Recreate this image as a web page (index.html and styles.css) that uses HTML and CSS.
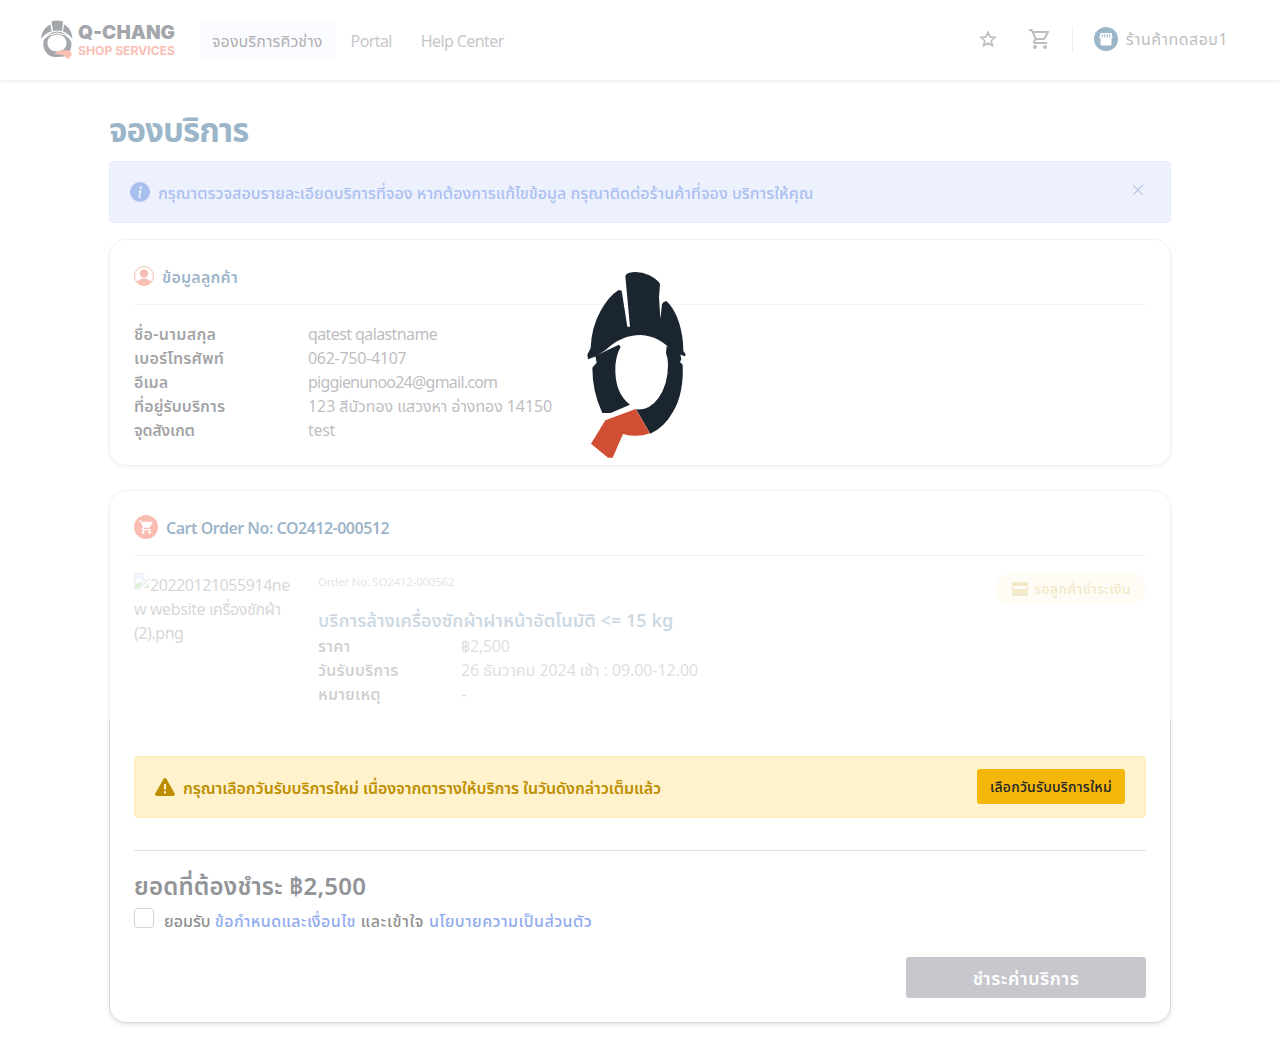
FILE: index.html
```html
<!DOCTYPE html>
<html lang="th">
<head>
<meta charset="utf-8">
<title>Q-CHANG Shop Services</title>
<link rel="stylesheet" href="styles.css">
</head>
<body>
<header class="topbar">
  <svg class="brand" width="138" height="42" viewBox="0 0 138 42">
    <g fill="#1b2530">
      <path fill-rule="evenodd" d="M3.500 21a14.500 14.800 0 0 1 27 0l1 2a15 15 0 0 1-7 13.500l-7 .5q-9 1-13-7a16 16 0 0 1-1-9zM17 14.500c-6 0-9.500 4-9.500 8.500s3.500 8.500 9.500 8.500 9.500-4 9.500-8.500-3.500-8.500-9.500-8.500z"/>
      <path d="M1 19C1.500 12 5 7 10.500 4.500l1 7C6 13 4 15.500 1 19zM11.500 1.500Q17-.5 23 1.500L22 11q-5-1-9 0zM24 4.500c5 2 8 7.500 8.500 14.500-2.500-3.500-5.500-6-9.500-7.500z"/>
    </g>
    <path d="M2 20q15-14 30 0" fill="none" stroke="#fff" stroke-width="1"/>
    <path fill="#f05a40" d="M14 34l6-4 10 .5 2 4-4 5-4-4-5-1z"/>
    <text class="brand-name" x="38" y="18.500" textLength="97" lengthAdjust="spacingAndGlyphs">Q-CHANG</text>
    <text class="brand-sub" x="38" y="35" textLength="97" lengthAdjust="spacingAndGlyphs">SHOP SERVICES</text>
  </svg>
  <nav class="nav">
    <a class="nav-link active"><span class="t-nav">จองบริการคิวช่าง</span></a>
    <a class="nav-link t-portal">Portal</a>
    <a class="nav-link t-help">Help Center</a>
  </nav>
  <div class="tools">
    <svg class="star" width="18" height="18" viewBox="0 0 24 24"><path fill="none" stroke="#5a5a64" stroke-width="2.200" d="M12 3l2.700 6.200 6.800.6-5.200 4.500 1.600 6.700L12 17.400 6.100 21l1.600-6.700-5.200-4.500 6.800-.6z"/></svg>
    <svg class="cart" width="24" height="24" viewBox="0 0 24 24"><path fill="#5a5a64" d="M15.550 13c.75 0 1.410-.41 1.750-1.030l3.580-6.490A.996.996 0 0 0 20.010 4H5.210l-.94-2H1v2h2l3.600 7.590-1.350 2.440C4.520 15.370 5.480 17 7 17h12v-2H7l1.100-2h7.450zM6.160 6h12.150l-2.760 5H8.530L6.160 6zM7 18c-1.100 0-1.990.9-1.990 2S5.900 22 7 22s2-.9 2-2-.9-2-2-2zm10 0c-1.100 0-1.990.9-1.990 2s.89 2 1.990 2 2-.9 2-2-.9-2-2-2z"/></svg>
    <span class="divider"></span>
    <svg width="24" height="24" viewBox="0 0 24 24"><circle cx="12" cy="12" r="12" fill="#054678"/><path fill="#fff" d="M6.500 6h11l1 4a1.500 1.500 0 0 1-1 1.700V17a1.500 1.500 0 0 1-1.500 1.500H8A1.500 1.500 0 0 1 6.500 17v-5.300a1.500 1.500 0 0 1-1-1.700z"/><path stroke="#054678" d="M8.500 7l-.5 3.500M10.800 7v3.500M13.200 7v3.500M15.500 7l.5 3.500"/></svg>
    <span class="shop t-shop">ร้านค้าทดสอบ1</span>
  </div>
</header>

<main class="page">
  <h1 class="title"><span class="t-title">จองบริการ</span></h1>
  <div class="alert info">
    <svg width="20" height="20" viewBox="0 0 20 20"><circle cx="10" cy="10" r="10" fill="#2960d9"/><circle cx="11" cy="5.700" r="1.300" fill="#d2dcfa"/><path d="M8.500 9h2L9.300 15h1.500" fill="none" stroke="#d2dcfa" stroke-width="1.600"/></svg>
    <span class="alert-text t-info">กรุณาตรวจสอบรายละเอียดบริการที่จอง หากต้องการแก้ไขข้อมูล กรุณาติดต่อร้านค้าที่จอง บริการให้คุณ</span>
    <svg class="close" width="12" height="12" viewBox="0 0 12 12"><path d="M1 1l10 10m0-10l-10 10" stroke="#5f78c0" stroke-width="1.400"/></svg>
  </div>

  <section class="card customer">
    <h2 class="card-title">
      <svg width="20" height="20" viewBox="0 0 20 20"><circle cx="10" cy="10" r="9.500" fill="none" stroke="#f05a40"/><circle cx="10" cy="7.500" r="4" fill="#f05a40"/><path fill="#f05a40" d="M3 16q2.500-3.500 7-3.500t7 3.500q-3 3.500-7 3.500T3 16z"/></svg>
      <span class="t-cust">ข้อมูลลูกค้า</span>
    </h2>
    <dl class="facts">
      <dt><span class="t-f1">ชื่อ-นามสกุล</span></dt><dd class="t-name">qatest qalastname</dd>
      <dt><span class="t-f2">เบอร์โทรศัพท์</span></dt><dd class="t-phone">062-750-4107</dd>
      <dt><span class="t-f3">อีเมล</span></dt><dd class="t-mail">piggienunoo24@gmail.com</dd>
      <dt><span class="t-f4">ที่อยู่รับบริการ</span></dt><dd><span class="t-addr">123 สีบัวทอง แสวงหา อ่างทอง 14150</span></dd>
      <dt><span class="t-f5">จุดสังเกต</span></dt><dd class="t-phone">test</dd>
    </dl>
  </section>

  <section class="card order">
    <h2 class="card-title">
      <svg width="24" height="24" viewBox="0 0 24 24"><circle cx="12" cy="12" r="12" fill="#f05a40"/><path fill="#fff" transform="translate(4.500 4.200) scale(.66)" d="M7 18c-1.100 0-1.990.9-1.990 2S5.900 22 7 22s2-.9 2-2-.9-2-2-2zM1 2v2h2l3.600 7.590-1.350 2.450C4.520 15.370 5.480 17 7 17h12v-2H7.420l.68-2h7.450c.75 0 1.410-.41 1.750-1.030L21.700 4H5.210l-.94-2H1zm16 16c-1.100 0-1.990.9-1.990 2s.89 2 1.990 2 2-.9 2-2-.9-2-2-2z"/></svg>
      <span class="t-cart">Cart Order No: CO2412-000512</span>
    </h2>
    <div class="item">
      <div class="thumb">
        <svg width="16" height="16" viewBox="0 0 16 16"><path fill="#c5d6f5" stroke="#a0a0a0" d="M.5 2.500a2 2 0 0 1 2-2H10l5.500 5.500L6 15.500H.5z"/><path fill="#fff" d="M3 7a2 2 0 0 1 4 0h1v2H2V7zM10 .5V6h5.500z"/><path fill="#5cb947" d="M1 15v-2l4-4 3 2-3 4zM10 15l5-5v5z"/></svg><span class="t-alt1">20220121055914ne</span><br><span class="t-alt2">w website เครื่องซักผ้า</span><br><span class="t-alt1">(2).png</span>
      </div>
      <div class="detail">
        <p class="order-no">Order No: SO2412-000562</p>
        <h3 class="service"><span class="t-serv">บริการล้างเครื่องซักผ้าฝาหน้าอัตโนมัติ &lt;= 15 kg</span></h3>
        <dl class="facts">
          <dt><span class="t-g1">ราคา</span></dt><dd class="t-phone">฿2,500</dd>
          <dt><span class="t-g2">วันรับบริการ</span></dt><dd><span class="t-addr">26 ธันวาคม 2024 เช้า : 09.00-12.00</span></dd>
          <dt><span class="t-g3">หมายเหตุ</span></dt><dd>-</dd>
        </dl>
      </div>
      <span class="badge"><svg width="16" height="14" viewBox="0 0 16 14"><path fill-rule="evenodd" fill="#c69500" d="M2 0h12a2 2 0 0 1 2 2v10a2 2 0 0 1-2 2H2a2 2 0 0 1-2-2V2a2 2 0 0 1 2-2zM1.300 4v3h13.400V4z"/></svg><span class="t-badge">รอลูกค้าชำระเงิน</span></span>
    </div>
    <div class="alert warn">
      <svg width="20" height="18" viewBox="0 0 20 18"><path fill="#bd8f00" d="M8.600.8a1.600 1.600 0 0 1 2.800 0l8.300 14.700a1.600 1.600 0 0 1-1.400 2.400H1.700A1.600 1.600 0 0 1 .3 15.500z"/><path stroke="#fff3cd" stroke-width="2" d="M10 6v5.500M10 13.200v2.200"/></svg>
      <span class="alert-text t-warn">กรุณาเลือกวันรับบริการใหม่ เนื่องจากตารางให้บริการ ในวันดังกล่าวเต็มแล้ว</span>
      <button class="pick"><span class="t-pick">เลือกวันรับบริการใหม่</span></button>
    </div>
    <div class="checkout">
      <h3 class="total"><span class="t-total">ยอดที่ต้องชำระ ฿2,500</span></h3>
      <label class="accept"><span class="box"></span><span class="terms">ยอมรับ <a>ข้อกำหนดและเงื่อนไข</a><span class="t-and"> และเข้าใจ </span><a>นโยบายความเป็นส่วนตัว</a></span></label>
      <button class="pay"><span class="t-pay">ชำระค่าบริการ</span></button>
    </div>
  </section>
</main>

<div class="loading">
  <svg width="130" height="210" viewBox="0 0 390 630">
    <g fill="#1b2530">
      <path d="M166 48q2-8 12-10 30-6 60 8 24 12 32 26l-3 38 4 68 5-46q4-8 13-9 18 16 32 48 14 34 18 78l1 24 7 10-2 6-14-5-22-8q-40-48-97-51-58 0-104 44l-30 20-24 9-2-14 10-20q2-60 28-108 26-48 56-66l9 2 17 108h8z"/>
      <path d="M76 288l70-34 6 6q-18 32-16 76 2 66 44 98l-58 25H97q-30-64-30-136l13-15z"/>
      <path d="M290 258l40 22 4 18-4 8 8 8q4 84-28 140-26 48-69 67l-43-73q40 4 68-35 28-40 28-98 0-20-6-36z"/>
    </g>
    <path fill="#d04e33" d="M197 447l43 73q-38 14-81 2l-31 71h-14l-51-42 43-70z"/>
  </svg>
</div>
</body>
</html>
```
FILE: styles.css
```css
* { box-sizing: border-box; }
body { margin: 0; background: #fff; color: #15181c; font: 16px/24px "Noto Sans", "Noto Sans Thai", sans-serif; height: 1047px; overflow: hidden; }
h1, h2, h3, p, dl, dd { margin: 0; }
svg { flex: none; display: block; }
button { font: inherit; border: 0; padding: 0; }
span[class*="t-"] { white-space: nowrap; }

.topbar { height: 80px; display: flex; align-items: center; padding: 0 52px 0 40px; box-shadow: 0 1px 4px rgba(0,0,0,.25); }
.brand { margin: 2px 22px 0 0; }
.brand-name { font: 900 19px Inter, sans-serif; fill: #1b2530; }
.brand-sub { font: 700 12px Inter, sans-serif; fill: #f05a40; }
.nav { display: flex; gap: 4px; }
.nav-link { height: 40px; padding: 9px 12px 7px; border-radius: 4px; color: #707078; }
.nav-link.active { background: #f6f8fe; color: #333; }
.tools { margin-left: auto; display: flex; align-items: center; height: 28px; padding-bottom: 3px; color: #5a5a64; }
.cart { margin: 0 20px 0 32px; }
.star { margin-right: -1px; }
.divider { width: 1px; height: 26px; background: #d5d5e5; margin-right: 21px; }
.shop { margin-left: 8px; }

.page { width: 1062px; margin: 0 auto; padding-top: 27px; }
.title { font-size: 33px; line-height: 46px; height: 54px; font-weight: 700; color: #054678; }
.alert { display: flex; align-items: center; height: 62px; padding: 0 20px; border: 1px solid; border-radius: 4px; gap: 8px; font-weight: 500; }
.alert-text { padding-top: 2px; }
.info { background: #d2dcfa; border-color: #c0cef7; color: #2960d9; }
.close { margin: -5px 6px 0 auto; }
.card { margin-top: 16px; padding: 24px; border: 1px solid #d9d9dc; border-radius: 17px; background: #fff; box-shadow: 0 2px 4px rgba(0,0,0,.1); }
.customer { height: 227px; }
.order { margin-top: 24px; height: 533px; }
.card-title { display: flex; align-items: center; gap: 8px; height: 41px; padding-bottom: 17px; border-bottom: 1px solid #dee0e2; font-size: 16px; font-weight: 600; color: #054678; }
.card-title span { padding-top: 2px; }
.facts { display: grid; grid-template-columns: 174px 1fr; }
.facts dt { font-weight: 600; }
.facts dd { color: #5a5a64; }
.customer .facts { padding-top: 17px; }

.item { display: flex; height: 184px; padding-top: 16px; opacity: .5; }
.thumb { width: 160px; margin-right: 24px; padding-top: 1px; white-space: nowrap; color: #333; }
.thumb svg { display: inline-block; vertical-align: 2px; }
.order-no { font-size: 11.5px; line-height: 20px; letter-spacing: -.22px; color: #6c757d; }
.service { font-size: 18px; line-height: 26px; font-weight: 600; margin-top: 15px; color: #054678; }
.item .facts { grid-template-columns: 143px 1fr; padding-top: 1px; }
.badge { display: flex; align-items: center; gap: 6px; height: 34px; margin-left: auto; padding: 0 15px 0 17px; border-radius: 17px; background: #fff3cd; color: #c69500; font-size: 14px; font-weight: 600; }

.warn { background: #fff2cc; border-color: #ffeab0; color: #bd8f00; margin-top: 16px; font-weight: 600; }
.pick { margin: -2px 0 0 auto; padding-top: 2px; width: 148px; height: 35px; border-radius: 3px; background: #f4b709; color: #212529; font-size: 14px; font-weight: 500; }
.checkout { display: flex; flex-direction: column; margin-top: 32px; border-top: 1px solid #dfdfe0; padding-top: 18px; }
.total { font-size: 24px; line-height: 34px; font-weight: 600; color: #929497; }
.accept { display: flex; gap: 10px; padding-top: 5px; color: #8f8f90; font-weight: 500; }
.accept a { color: #8fabee; letter-spacing: .45px; }
.box { width: 20px; height: 20px; border: 1px solid #d2d2d8; border-radius: 4px; }
.terms { padding-top: 1px; }
.pay { align-self: flex-end; width: 240px; height: 41px; margin-top: 24px; border-radius: 3px; background: #c7c7cd; color: #fff; font-size: 18px; font-weight: 600; }

/* Letter spacing tuned per label */
.t-nav { letter-spacing: .1px; }
.t-portal { letter-spacing: -.6px; }
.t-help { letter-spacing: -.6px; padding-left: 13px; }
.t-shop { letter-spacing: .45px; }
.t-title { letter-spacing: -.95px; }
.t-info { letter-spacing: .04px; }
.t-cust { letter-spacing: .2px; }
.t-f1 { letter-spacing: .3px; }
.t-f2 { letter-spacing: .22px; }
.t-f4 { letter-spacing: .1px; }
.t-f5 { letter-spacing: -.3px; }
.t-name { letter-spacing: -.6px; }
.t-phone { letter-spacing: -.28px; }
.t-mail { letter-spacing: -.78px; }
.t-addr { letter-spacing: -.07px; }
.t-cart { letter-spacing: -.5px; }
.t-alt1 { letter-spacing: -.45px; }
.t-alt2 { letter-spacing: -.4px; }
.t-serv { letter-spacing: .04px; }
.t-g1, .t-g2, .t-g3 { letter-spacing: .15px; }
.t-badge { letter-spacing: .25px; }
.t-warn { letter-spacing: -.08px; }
.t-pick { letter-spacing: .22px; }
.t-total { letter-spacing: .22px; }
.t-and { letter-spacing: .75px; }
.t-pay { letter-spacing: .6px; }

.loading { position: fixed; top: 0; left: 0; width: 100%; height: 720px; padding: 260px 0 0 570px; background: rgba(255,255,255,.6); }
.loading svg { display: block; }
```
